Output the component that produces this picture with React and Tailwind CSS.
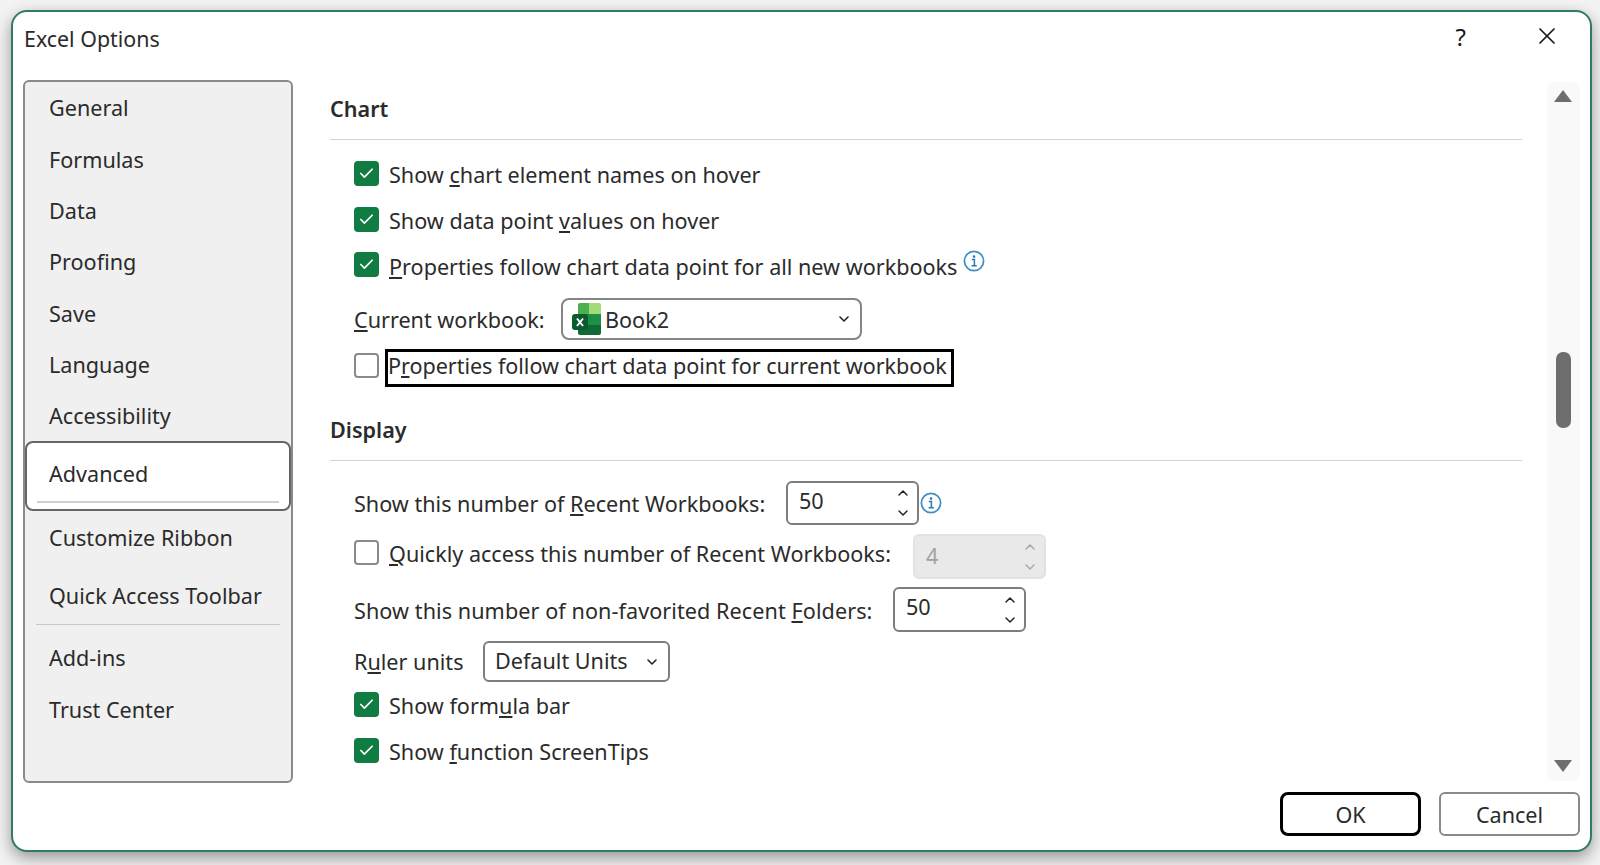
import { ChevronDown, ChevronUp, Check, X } from "lucide-react";

const topItems = ["General", "Formulas", "Data", "Proofing", "Save", "Language", "Accessibility"];

const CheckBox = ({ checked, className = "-mt-[3px]" }) =>
  checked ? (
    <span className={`flex h-[25px] w-[25px] shrink-0 items-center justify-center rounded-[4px] bg-[#107c41] ${className}`}>
      <Check size={17} strokeWidth={2.4} className="text-white" />
    </span>
  ) : (
    <span className={`h-[25px] w-[25px] shrink-0 rounded-[4px] border-2 border-[#8a8a8a] bg-white ${className}`} />
  );

const Info = () => (
  <svg width="22" height="22" viewBox="0 0 22 22" className="block shrink-0">
    <circle cx="11" cy="11" r="9.6" fill="none" stroke="#3f8fc4" strokeWidth="1.7" />
    <circle cx="11" cy="6.6" r="1.3" fill="#2a78ad" />
    <path d="M8.8 9.6H11.4V15.6M8.6 15.8H13.8" fill="none" stroke="#2a78ad" strokeWidth="1.5" />
  </svg>
);

const CheckRow = ({ checked, className, children }) => (
  <div className={`flex h-[30px] items-center gap-[10px] ${className}`}>
    <CheckBox checked={checked} />
    <span className="mt-[1px]">{children}</span>
  </div>
);

const Spinner = ({ value, disabled, className }) => (
  <div
    className={`flex h-full items-center rounded-[6px] border-2 pl-[11px] pr-[6px] ${
      disabled ? "border-[#e2e2e2] bg-[#e9e9e9] text-[#a3a3a3]" : "border-[#7d7d7d] bg-white"
    } ${className}`}
  >
    <span className={disabled ? "-mt-[1px]" : "-mt-[4px]"}>{value}</span>
    <div className={`ml-auto flex flex-col gap-[4px] ${disabled ? "text-[#a8a8a8]" : "text-[#222]"}`}>
      <ChevronUp size={16} strokeWidth={2.2} />
      <ChevronDown size={16} strokeWidth={2.2} />
    </div>
  </div>
);

const ExcelIcon = () => (
  <svg width="29" height="32" viewBox="0 0 29 32" className="shrink-0">
    <path d="M6 2a2 2 0 0 1 2-2h9v11H6z" fill="#4caf50" />
    <path d="M17 0h10a2 2 0 0 1 2 2v9H17z" fill="#a2dc78" />
    <rect x="6" y="11" width="23" height="11" fill="#1f8f46" />
    <path d="M6 22h23v8a2 2 0 0 1-2 2H8a2 2 0 0 1-2-2z" fill="#0f6a37" />
    <rect x="0" y="11" width="16" height="16" rx="3" fill="#0c5a30" />
    <path d="M5 15.5l6 7.5M11 15.5l-6 7.5" stroke="#fff" strokeWidth="2" />
  </svg>
);

export default function App() {
  return (
    <div className="h-[865px] w-[1600px] overflow-hidden bg-[#f3f3f3] pl-[11px] pt-[10px] font-['Noto_Sans',sans-serif] text-[21.6px] text-[#2b2b2b]">
      <div className="h-[842px] w-[1581px] rounded-[16px] border-2 border-[#2f7d5c] bg-white shadow-[0_6px_16px_rgba(0,0,0,0.38)]">
        {/* Title bar */}
        <div className="flex h-[68px] items-start pl-[11px] pr-[29px] pt-[10px]">
          <span className="mt-[1px] text-[21.4px] leading-[32px]">Excel Options</span>
          <span className="-mt-[1px] ml-auto text-[24px] leading-[32px] text-[#1a1a1a]">?</span>
          <X size={28} strokeWidth={1.5} className="ml-[67px] text-[#1a1a1a]" />
        </div>

        <div className="flex h-[703px] pl-[10px] pr-[10px]">
          {/* Sidebar */}
          <div className="h-full w-[270px] shrink-0 rounded-[6px] border-2 border-[#8a8a8a] bg-[#f0f0f0] pt-[1px]">
            {topItems.map((item) => (
              <div key={item} className="flex h-[51.3px] items-center pl-[24px]">
                {item}
              </div>
            ))}
            <div className="relative -mt-[1px] flex h-[70px] items-center rounded-[8px] border-2 border-[#666] bg-white pl-[22px]">
              <span className="-mt-[3px]">Advanced</span>
              <div className="absolute bottom-[6px] left-[10px] right-[10px] h-[2px] bg-[#d0d0d0]" />
            </div>
            <div className="flex h-[54px] items-center pl-[24px]">Customize Ribbon</div>
            <div className="mt-[4px] flex h-[54px] items-center pl-[24px]">Quick Access Toolbar</div>
            <div className="mx-[11px] mt-[1px] h-[1px] bg-[#c8c8c8]" />
            <div className="mt-[7px] flex h-[53px] items-center pl-[24px]">Add-ins</div>
            <div className="flex h-[51px] items-center pl-[24px]">Trust Center</div>
          </div>

          {/* Options */}
          <div className="ml-[37px] w-[1192px] shrink-0">
            <h2 className="mt-[14px] h-[30px] font-semibold leading-[30px]">Chart</h2>
            <div className="mt-[15px] h-[1px] bg-[#d4d4d4]" />
            <div className="pl-[24px]">
              <CheckRow checked className="mt-[20px]">
                Show <u>c</u>hart element names on hover
              </CheckRow>
              <CheckRow checked className="mt-[16px]">
                Show data point <u>v</u>alues on hover
              </CheckRow>
              <div className="mt-[15px] flex h-[30px] items-center gap-[10px]">
                <CheckBox checked />
                <span className="mt-[2px]">
                  <u>P</u>roperties follow chart data point for all new workbooks
                </span>
                <span className="-mt-[11px] -ml-[4px]">
                  <Info />
                </span>
              </div>
              <div className="mt-[17px] flex h-[42px] items-center">
                <span className="mt-[2px] w-[207px] shrink-0">
                  <u>C</u>urrent workbook:
                </span>
                <div className="flex h-full w-[301px] items-center rounded-[8px] border-2 border-[#858585] pl-[9px] pr-[8px]">
                  <ExcelIcon />
                  <span className="ml-[4px] mt-[2px]">Book2</span>
                  <ChevronDown size={16} strokeWidth={2.4} className="ml-auto text-[#222]" />
                </div>
              </div>
              <div className="mt-[9px] flex h-[38px] items-center">
                <CheckBox className="-mt-[6px]" />
                <span className="ml-[6px] flex h-full w-[569px] shrink-0 items-center whitespace-nowrap border-[3px] border-black">
                  <span className="-mt-[4px] tracking-[-0.05px]">
                    P<u>r</u>operties follow chart data point for current workbook
                  </span>
                </span>
              </div>
            </div>

            <h2 className="mt-[28px] h-[30px] font-semibold leading-[30px]">Display</h2>
            <div className="mt-[15px] h-[1px] bg-[#d4d4d4]" />
            <div className="pl-[24px]">
              <div className="mt-[20px] flex h-[44px] items-center">
                <span className="mt-[2px] w-[432px] shrink-0">
                  Show this number of <u>R</u>ecent Workbooks:
                </span>
                <Spinner value="50" className="w-[133px]" />
                <span className="ml-[1px]">
                  <Info />
                </span>
              </div>
              <div className="mt-[9px] flex h-[45px] items-center">
                <CheckBox className="-mt-[8px]" />
                <span className="-mt-[5px] ml-[10px] w-[524px] shrink-0">
                  <u>Q</u>uickly access this number of Recent Workbooks:
                </span>
                <Spinner value="4" disabled className="w-[133px]" />
              </div>
              <div className="mt-[8px] flex h-[45px] items-center">
                <span className="mt-[4px] w-[539px] shrink-0 tracking-[0.07px]">
                  Show this number of non-favorited Recent <u>F</u>olders:
                </span>
                <Spinner value="50" className="w-[133px]" />
              </div>
              <div className="mt-[9px] flex h-[41px] items-center">
                <span className="mt-[2px] w-[129px] shrink-0">
                  R<u>u</u>ler units
                </span>
                <div className="flex h-full w-[187px] items-center rounded-[6px] border-2 border-[#7d7d7d] pl-[10px] pr-[8px]">
                  <span>Default Units</span>
                  <ChevronDown size={16} strokeWidth={2.4} className="ml-auto text-[#222]" />
                </div>
              </div>
              <CheckRow checked className="mt-[9px]">
                Show form<u>u</u>la bar
              </CheckRow>
              <CheckRow checked className="mt-[16px]">
                Show <u>f</u>unction ScreenTips
              </CheckRow>
            </div>
          </div>

          {/* Scrollbar */}
          <div className="relative ml-[25px] mt-[2px] h-[699px] w-[33px] shrink-0 rounded-[8px] bg-[#f9f9f9]">
            <div className="absolute left-[7px] top-[8px] h-0 w-0 border-x-[9px] border-b-[12px] border-x-transparent border-b-[#6e6e6e]" />
            <div className="absolute left-[9px] top-[270px] h-[76px] w-[15px] rounded-[7px] bg-[#6e6e6e]" />
            <div className="absolute bottom-[9px] left-[7px] h-0 w-0 border-x-[9px] border-t-[12px] border-x-transparent border-t-[#6e6e6e]" />
          </div>
        </div>

        {/* Footer */}
        <div className="mt-[9px] flex justify-end gap-[18px] pr-[10px]">
          <button className="h-[44px] w-[141px] rounded-[8px] border-[3px] border-black pt-[2px]">OK</button>
          <button className="h-[44px] w-[141px] rounded-[6px] border-2 border-[#8a8a8a] pt-[2px]">Cancel</button>
        </div>
      </div>
    </div>
  );
}
